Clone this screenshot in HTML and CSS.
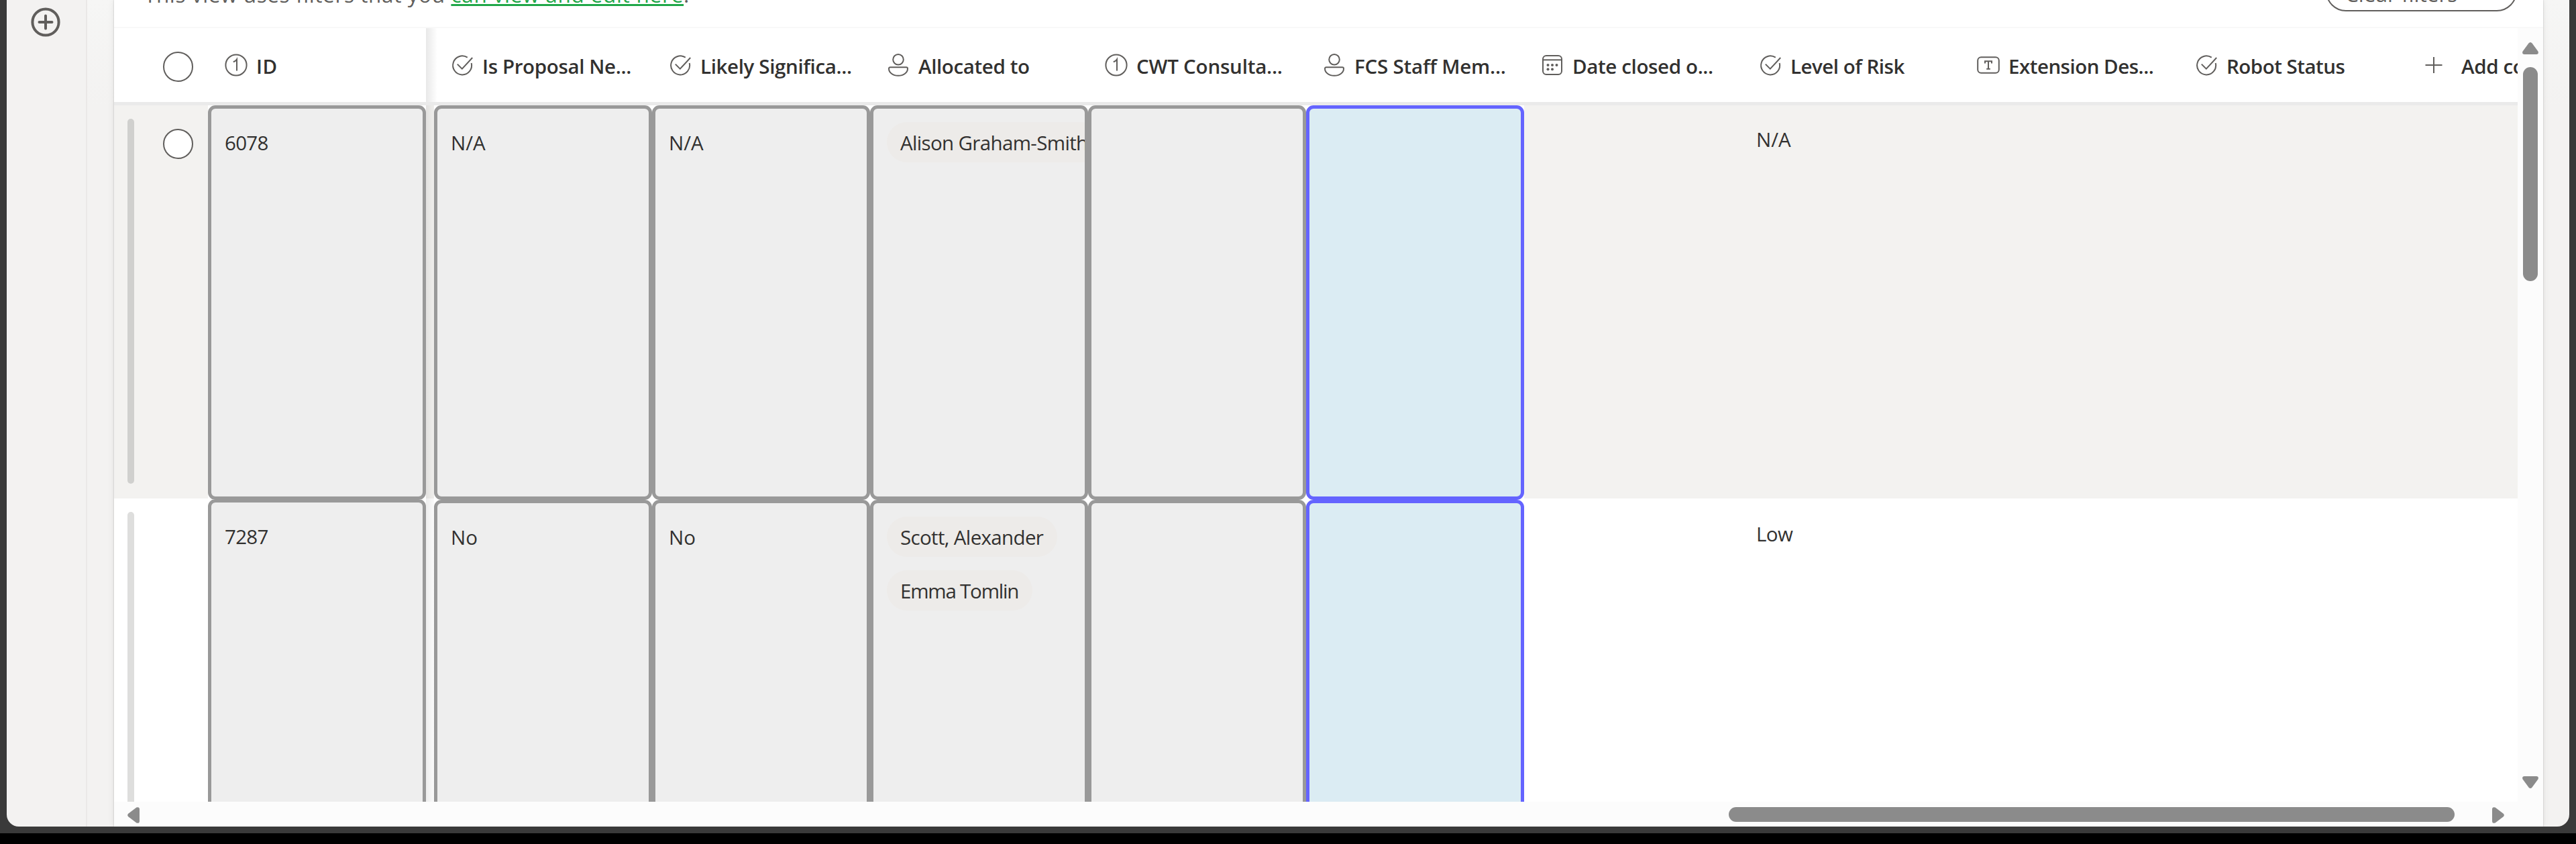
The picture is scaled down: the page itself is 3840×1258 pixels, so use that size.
FILE: index.html
```html
<!DOCTYPE html>
<html lang="en">
<head>
<meta charset="utf-8">
<title>List view</title>
<link rel="stylesheet" href="styles.css">
</head>
<body>
<svg class="sprite" width="0" height="0">
  <symbol id="number" viewBox="0 0 34 34"><circle cx="17" cy="17" r="15.6"/><path d="M12.800 12.300q3.600-1.200 5.200-3.800v17"/></symbol>
  <symbol id="choice" viewBox="0 0 34 34"><path d="M24.800 5.700A14 14 0 1 0 30.700 14"/><path d="M9.800 15.600l7 7L32.200 6"/></symbol>
  <symbol id="person" viewBox="0 0 34 34"><circle cx="17" cy="8.800" r="7.800"/><path d="M5 20.200h24a2 2 0 0 1 2 2c0 6-6 10.600-14 10.600S3 28.200 3 22.200a2 2 0 0 1 2-2z"/></symbol>
  <symbol id="date" viewBox="0 0 34 34"><rect x="3" y="3" width="28" height="28" rx="5"/><path d="M3 9.300h28"/><g class="dots"><circle cx="10.500" cy="17" r="2"/><circle cx="17" cy="17" r="2"/><circle cx="23.500" cy="17" r="2"/><circle cx="10.500" cy="23.200" r="2"/><circle cx="17" cy="23.200" r="2"/></g></symbol>
  <symbol id="text" viewBox="0 0 34 34"><rect x="1.200" y="5.200" width="31.600" height="23.600" rx="5"/><path d="M12 14.500v-3.200h10v3.200M17 11.300v11.400M14.200 22.700h5.600"/></symbol>
  <symbol id="plus" viewBox="0 0 34 34"><path d="M17 5v24M4.500 17h25"/></symbol>
  <symbol id="arrow" viewBox="0 0 24 18"><path d="M9.400 1.600Q12-1.400 14.600 1.600L23.400 13.400Q25 17.700 21 18H3Q-1 17.700.6 13.400z"/></symbol>
</svg>
<div class="app">
  <nav class="rail">
    <svg class="add" viewBox="0 0 44 44"><circle cx="22" cy="22" r="19.600"/><path d="M22 12.500v19M12.500 22h19"/></svg>
  </nav>
  <div class="gutter"></div>
  <main class="panel">
    <div class="notice">
      <p>This view uses filters that you <a>can view and edit here</a>.</p>
      <span class="clear">Clear filters</span>
    </div>
    <div class="grid-area">
      <div class="grid">
        <div class="cols head">
          <div class="select"><i class="check"></i></div>
          <div class="th wide"><svg><use href="#number"/></svg><span>ID</span></div>
          <div class="divider"></div>
          <div class="th"><svg><use href="#choice"/></svg><span>Is Proposal Ne...</span></div>
          <div class="th"><svg><use href="#choice"/></svg><span>Likely Significa...</span></div>
          <div class="th"><svg><use href="#person"/></svg><span>Allocated to</span></div>
          <div class="th loose"><svg><use href="#number"/></svg><span>CWT Consulta...</span></div>
          <div class="th loose"><svg><use href="#person"/></svg><span>FCS Staff Mem...</span></div>
          <div class="th"><svg><use href="#date"/></svg><span>Date closed o...</span></div>
          <div class="th tight"><svg><use href="#choice"/></svg><span>Level of Risk</span></div>
          <div class="th tight"><svg><use href="#text"/></svg><span>Extension Des...</span></div>
          <div class="th tight"><svg><use href="#choice"/></svg><span>Robot Status</span></div>
          <div class="th new"><svg><use href="#plus"/></svg><span>Add column</span></div>
        </div>
        <div class="cols row alt">
          <div class="select"><i class="bar"></i><i class="check"></i></div>
          <div class="td id"><div class="cell"><span>6078</span></div></div>
          <div class="divider"></div>
          <div class="td"><div class="cell"><span>N/A</span></div></div>
          <div class="td"><div class="cell"><span>N/A</span></div></div>
          <div class="td"><div class="cell people"><span class="pill">Alison Graham-Smith</span></div></div>
          <div class="td"><div class="cell"></div></div>
          <div class="td"><div class="cell active"></div></div>
          <div></div>
          <div class="plain"><span>N/A</span></div>
        </div>
        <div class="cols row">
          <div class="select"><i class="bar"></i></div>
          <div class="td id"><div class="cell"><span>7287</span></div></div>
          <div class="divider"></div>
          <div class="td"><div class="cell"><span>No</span></div></div>
          <div class="td"><div class="cell"><span>No</span></div></div>
          <div class="td"><div class="cell people"><span class="pill">Scott, Alexander</span><span class="pill narrow">Emma Tomlin</span></div></div>
          <div class="td"><div class="cell"></div></div>
          <div class="td"><div class="cell active"></div></div>
          <div></div>
          <div class="plain low"><span>Low</span></div>
        </div>
      </div>
      <div class="vscroll"><svg><use href="#arrow"/></svg><i></i><svg class="down"><use href="#arrow"/></svg></div>
      <div class="hscroll"><svg class="left" viewBox="0 0 18 24"><use href="#arrow" width="24" height="18" transform="translate(0 24) rotate(-90)"/></svg><i></i><svg class="right" viewBox="0 0 18 24"><use href="#arrow" width="24" height="18" transform="translate(18 0) rotate(90)"/></svg></div>
    </div>
  </main>
  <div class="gutter right"></div>
</div>
</body>
</html>
```
FILE: styles.css
```css
* { box-sizing: border-box; }
body {
  margin: 0;
  width: 3840px;
  height: 1258px;
  overflow: hidden;
  background: #000;
  color: #323130;
  font: 29.5px/40px "Open Sans", "Noto Sans", sans-serif;
}
.sprite { position: absolute; }
i { display: block; }
svg { fill: none; stroke: #605e5c; stroke-width: 2; }

.app {
  display: flex;
  height: 1242px;
  padding: 0 10px 10px;
  background: #3a3a3a;
}
.rail {
  width: 120px;
  padding: 11px 0 0 36px;
  background: #f3f2f1;
  border-right: 2px solid #eae8e7;
  border-bottom-left-radius: 18px;
}
.add { display: block; width: 44px; height: 44px; stroke-width: 4; stroke-linecap: round; }
.gutter { width: 40px; background: linear-gradient(#f6f6f5, #f3f2f1 160px); }
.gutter.right { width: 39px; border-bottom-right-radius: 18px; }
.panel {
  position: relative;
  width: 3621px;
  height: 1232px;
  background: #fff;
  box-shadow: 0 0 2px rgba(0, 0, 0, .22), 0 0 10px rgba(0, 0, 0, .08);
  clip-path: inset(0 -12px);
}

.notice {
  display: flex;
  justify-content: space-between;
  height: 42px;
  padding: 0 39px 0 45px;
  overflow: hidden;
  border-bottom: 2px solid #f8f8f8;
  color: #605e5c;
  font-size: 31.5px;
}
.notice p { margin: -28px 0 0; white-space: pre; letter-spacing: .6px; }
.notice a {
  color: #1fa748;
  text-decoration: underline;
  text-decoration-thickness: 3px;
  text-underline-offset: 2px;
  text-decoration-skip-ink: none;
  letter-spacing: .75px;
}
.clear {
  width: 285px;
  height: 60px;
  margin-top: -43px;
  padding-left: 27px;
  line-height: 64px;
  border: 2px solid #605e5c;
  border-radius: 30px;
}

.grid-area {
  display: grid;
  grid-template: 1153px 37px / 3583px 38px;
}
.grid { overflow: hidden; }
.cols {
  display: grid;
  grid-template-columns: 140px 325px 12px repeat(9, 325px);
  grid-auto-columns: 325px;
  grid-auto-flow: column;
}
.head { height: 115px; border-bottom: 5px solid #eaeaea; font-weight: 600; }
.th { display: flex; align-items: center; padding-left: 25px; white-space: nowrap; letter-spacing: -.36px; }
.th.wide { letter-spacing: .6px; }
.th.loose { letter-spacing: -.2px; }
.th.tight { letter-spacing: -.5px; }
.th span { margin-top: 3px; }
.th svg { width: 34px; height: 34px; margin-right: 13px; flex: none; }
.th.new { padding-left: 39px; }
.th.new svg { width: 34px; margin-right: 24px; }
.dots { fill: #605e5c; stroke: none; }
.divider { width: 17px; background: linear-gradient(90deg, rgba(0, 0, 0, .09), rgba(0, 0, 0, 0)); }

.row { height: 586px; align-items: start; background: #fff; }
.row.alt { background: #f3f2f0; }
.row .divider { width: 12px; height: 586px; background: linear-gradient(90deg, rgba(0, 0, 0, .07), rgba(0, 0, 0, .02)); }
.select { display: flex; padding: 20px 0 0 20px; }
.head .select { padding: 35px 0 0 73px; }
.bar { width: 10px; height: 544px; margin-right: 43px; border-radius: 5px; background: #dededd; }
.alt .bar { background: #d0d0ce; }
.check { width: 45px; height: 45px; border: 2px solid #605e5c; border-radius: 50%; background: #fff; }
.row .check { margin-top: 15px; }
.td { height: 588px; background: #fff; }
.td.id { letter-spacing: -.7px; }
.row:not(.alt) .td, .plain.low { margin-top: 2px; }
.row:not(.alt) .td.id { margin-top: 1px; }
.cell {
  height: 588px;
  padding: 31px 0 0 20px;
  overflow: hidden;
  border: 5px solid #999;
  border-radius: 11px;
  background: #eee;
}
.cell.active { border-color: #6464ff; background: #dbecf3; }
.people { display: flex; flex-direction: column; align-items: flex-start; gap: 20px; padding-top: 20px; }
.pill {
  flex: none;
  height: 60px;
  padding: 0 21px 0 20px;
  border-radius: 30px;
  background: #edebe9;
  line-height: 62px;
  letter-spacing: -.65px;
  white-space: nowrap;
}
.pill.narrow { letter-spacing: -1.2px; }
.plain { padding: 31px 0 0 21px; }
.plain.low { letter-spacing: -.6px; }

.vscroll, .hscroll { display: flex; background: #fcfcfc; }
.vscroll svg, .hscroll svg { stroke: none; fill: #8b8b8b; }
.vscroll { flex-direction: column; align-items: center; padding: 21px 0 20px; }
.vscroll svg { width: 24px; height: 18px; }
.vscroll i { width: 22px; height: 319px; margin-top: 19px; border-radius: 11px; background: #8b8b8b; }
.down { margin-top: auto; transform: rotate(180deg); }
.hscroll { grid-column: 1 / 3; align-items: center; height: 37px; padding: 2px 0 0 20px; }
.hscroll svg { width: 18px; height: 24px; }
.hscroll i { width: 1082px; height: 22px; margin: -1px 56px 0 2369px; border-radius: 11px; background: #8b8b8b; }
```
